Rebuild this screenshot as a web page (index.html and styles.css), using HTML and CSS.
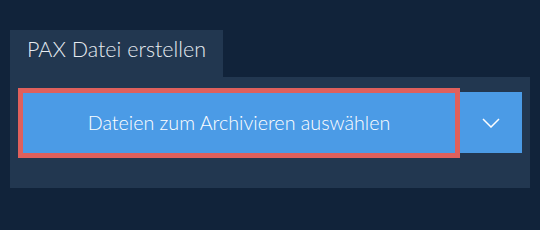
FILE: index.html
```html
<!DOCTYPE html>
<html lang="de">
<head>
  <meta charset="UTF-8" />
  <meta name="viewport" content="width=device-width, initial-scale=1" />
  <title>PAX Datei erstellen</title>
  <link rel="stylesheet" href="styles.css">
</head>
<body>

  <div class="creator">
    <div class="tab">PAX Datei erstellen</div>
    <div class="panel">
      <button class="pick-btn">Dateien zum Archivieren auswählen</button>
      <button class="more-btn" aria-label="Mehr">
        <svg width="18" height="10" viewBox="0 0 18 10">
          <polyline points="1,1 9,9 17,1" fill="none" stroke="#fff" stroke-width="1.5" />
        </svg>
      </button>
    </div>
  </div>

</body>
</html>
```

FILE: styles.css
```css
body {
  margin: 0;
  padding: 30px 10px;
  background-color: #11233a;
  font-family: Lato, sans-serif;
  font-weight: 300;
  color: #e6ebf1;
}
.creator {
  width: 520px;
}
.tab {
  display: inline-block;
  box-sizing: border-box;
  width: 213px;
  height: 47px;
  padding: 6px 0 0 17px;
  background: #223750;
  font-size: 21.5px;
  line-height: 26px;
}
.panel {
  background: #223750;
  display: flex;
  align-items: center;
  padding: 15px 8px 35px 13px;
}
button {
  border: none;
  background-color: #4b9be6;
  color: #fff;
  font-family: Lato, sans-serif;
  font-weight: 300;
  cursor: pointer;
}
.pick-btn {
  width: 432px;
  height: 60px;
  font-size: 19.7px;
  outline: 5px solid #df605c;
}
.more-btn {
  width: 62px;
  height: 61px;
  margin-left: 5px;
  display: flex;
  align-items: center;
  justify-content: center;
}
```
